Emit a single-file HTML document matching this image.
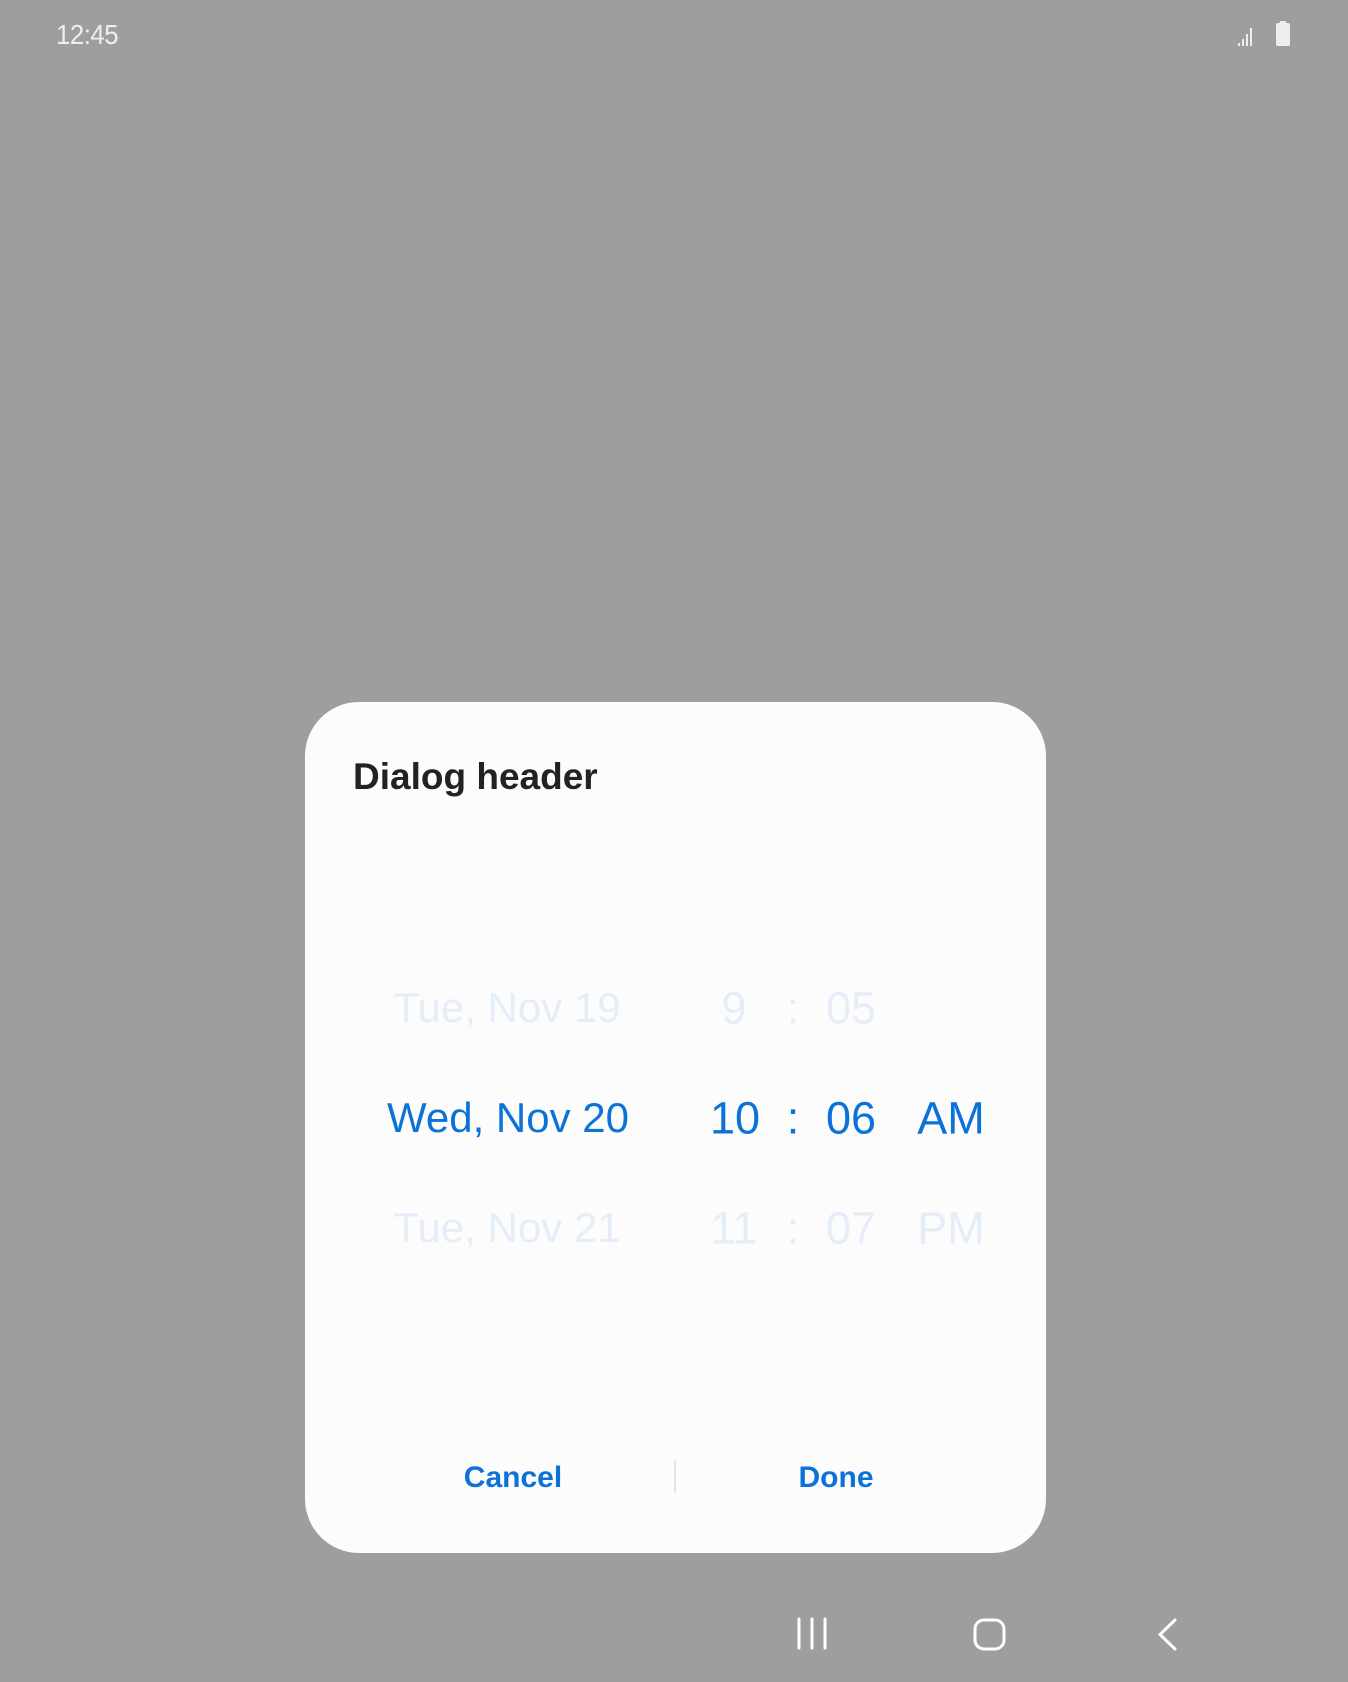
<!DOCTYPE html>
<html><head><meta charset="utf-8"><style>
html,body{margin:0;padding:0}
body{width:1348px;height:1682px;background:#9e9e9e;position:relative;overflow:hidden;font-family:"Liberation Sans",sans-serif}
.abs{position:absolute}
.dlg{left:305px;top:702px;width:741px;height:851px;background:#fcfcfc;border-radius:54px}
.t{position:absolute;transform:translate(-50%,-50%);white-space:nowrap;font-size:45px;line-height:1}
.d{font-size:42px}
.b{color:#0b72d8}
.f{color:#e5eef8}
</style></head><body>
<div class="abs" style="left:56px;top:19px;font-size:28px;color:#eee;letter-spacing:-0.5px;transform:scaleX(0.92);transform-origin:left">12:45</div>
<svg class="abs" style="left:1236px;top:20px" width="58" height="28" viewBox="0 0 58 28">
<g fill="#eee"><rect x="2" y="23" width="2" height="3"/><rect x="6" y="19" width="2" height="7"/><rect x="10" y="14" width="2" height="12"/><rect x="14" y="8" width="2" height="18"/><rect x="40" y="3" width="14" height="23" rx="2"/><rect x="44" y="1" width="6" height="3"/></g></svg>
<div class="abs dlg"></div>
<div class="abs" style="left:353px;top:756px;font-size:37px;font-weight:bold;color:#222">Dialog header</div>
<div class="t f d" style="left:507px;top:1008px">Tue, Nov 19</div>
<div class="t f" style="left:734px;top:1008px">9</div>
<div class="t f" style="left:793px;top:1008px">:</div>
<div class="t f" style="left:851px;top:1008px">05</div>
<div class="t b d" style="left:508px;top:1118px">Wed, Nov 20</div>
<div class="t b" style="left:735px;top:1118px">10</div>
<div class="t b" style="left:793px;top:1118px">:</div>
<div class="t b" style="left:851px;top:1118px">06</div>
<div class="t b" style="left:951px;top:1118px">AM</div>
<div class="t f d" style="left:507px;top:1228px">Tue, Nov 21</div>
<div class="t f" style="left:734px;top:1228px">11</div>
<div class="t f" style="left:793px;top:1228px">:</div>
<div class="t f" style="left:851px;top:1228px">07</div>
<div class="t f" style="left:951px;top:1228px">PM</div>
<div class="t b" style="left:513px;top:1478px;font-size:30px;font-weight:bold">Cancel</div>
<div class="t b" style="left:836px;top:1478px;font-size:30px;font-weight:bold">Done</div>
<div class="abs" style="left:674px;top:1461px;width:2px;height:32px;background:#e4e4e4"></div>
<svg class="abs" style="left:790px;top:1610px" width="400" height="50" viewBox="0 0 400 50">
<g stroke="#fff" stroke-width="3" fill="none" stroke-linecap="round">
<line x1="9" y1="9" x2="9" y2="38"/><line x1="22" y1="9" x2="22" y2="38"/><line x1="35" y1="9" x2="35" y2="38"/>
<rect x="185" y="10" width="29" height="29" rx="9"/>
<polyline points="385,10 370,24.5 385,39"/>
</g></svg>
</body></html>
